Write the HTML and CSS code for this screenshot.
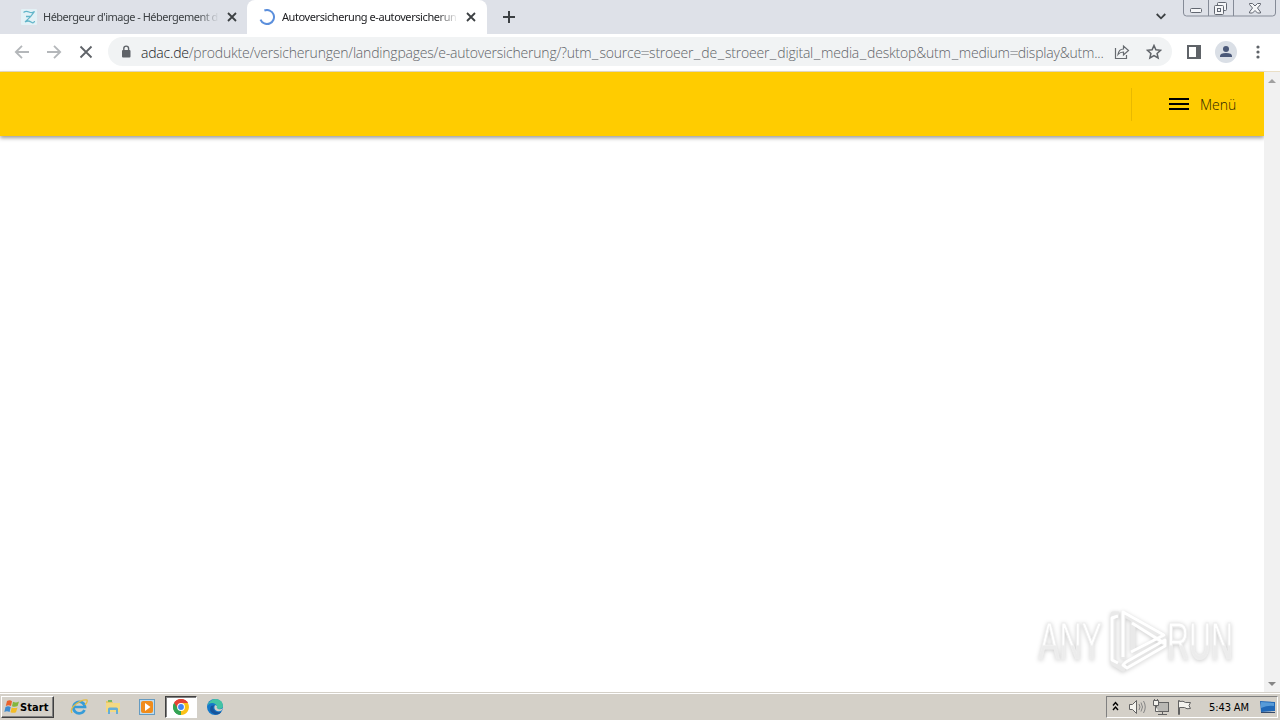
FILE: index.html
```html
<!DOCTYPE html>
<html lang="de">
<head>
<meta charset="utf-8">
<title>Autoversicherung e-autoversicherung</title>
<link rel="stylesheet" href="styles.css">
</head>
<body>
<div class="screen">
  <header class="tabstrip">
    <div class="tab">
      <svg class="fav" width="16" height="16" viewBox="0 0 16 16"><rect width="16" height="16" rx="1" fill="#e3f1f6"/><path d="M2.500 3.500Q5 1.500 8 3T13.500 2.500Q10 8 4 13Q7 11 10 13T13.500 12M5 7.500h5" fill="none" stroke="#62b5c9" stroke-width="1.300"/></svg>
      <span class="tab-title first">Hébergeur d'image - Hébergement d</span>
      <svg class="close" width="10" height="10" viewBox="0 0 10 10"><path d="M1 1l8 8M9 1l-8 8" stroke="#3c4043" stroke-width="1.8"/></svg>
    </div>
    <div class="tab active">
      <svg class="fav" width="16" height="16" viewBox="0 0 16 16"><path d="M8 1A7 7 0 1 1 1 8" transform="rotate(-22 8 8)" fill="none" stroke="#5b8fdc" stroke-width="2"/></svg>
      <span class="tab-title second">Autoversicherung e-autoversicherun</span>
      <svg class="close" width="10" height="10" viewBox="0 0 10 10"><path d="M1 1l8 8M9 1l-8 8" stroke="#3c4043" stroke-width="1.8"/></svg>
    </div>
    <svg class="plus" width="12" height="12" viewBox="0 0 12 12"><path d="M6 0v12M0 6h12" stroke="#3c4043" stroke-width="2"/></svg>
    <svg class="chev" width="10" height="7" viewBox="0 0 10 7"><path d="M.7 1L5 5.300 9.300 1" fill="none" stroke="#3c4043" stroke-width="1.800"/></svg>
    <svg class="winbtns" width="94" height="18" viewBox="0 0 94 18"><path d="M.5 0v13q0 3 3 3h86q3 0 3-3V0M25.500 0v16M50.500 0v16" fill="none" stroke="#858b97"/><g fill="#f5f6f8" stroke="#626771"><rect x="7.500" y="8.500" width="11" height="4" rx="1"/><rect x="34.500" y="2.500" width="9" height="8" rx="1"/><rect x="31.500" y="5.500" width="9" height="9" rx="1"/><rect x="34.500" y="8.500" width="3" height="3"/><path d="M66.500 3.500h3l2.500 2.500 2.500-2.500h3v1l-3 3.500 3 4v1h-3l-2.500-2.500-2.500 2.500h-3v-1l3-4-3-3.500z"/></g></svg>
  </header>
  <div class="toolbar">
    <svg class="navs" width="80" height="16" viewBox="0 0 80 16"><g fill="none" stroke="#b4b7ba" stroke-width="1.8"><path d="M15 8H2M8 1.800L1.800 8 8 14.200M33 8h13M40 1.800L46.200 8 40 14.200"/><path d="M66.500 2.500l11 11M77.500 2.500l-11 11" stroke="#5f6368"/></g></svg>
    <div class="omnibox">
      <svg width="10" height="14" viewBox="0 0 10 14"><rect x="1" y="5" width="8.500" height="7.500" rx="1" fill="#5f6368"/><path d="M2.800 5.500V3.500a2.400 2.400 0 0 1 4.800 0v2" fill="none" stroke="#5f6368" stroke-width="1.400"/></svg>
      <div class="url"><span class="host">adac.de</span>/produkte/versicherungen/landingpages/e-autoversicherung/?utm<span class="sep">_</span>source<span class="sep">=</span>stroeer<span class="sep">_</span>de<span class="sep">_</span>stroeer<span class="sep">_</span>digital<span class="sep">_</span>media<span class="sep">_</span>desktop&amp;utm<span class="sep">_</span>medium<span class="sep">=</span>display&amp;utm...</div>
      <svg class="share" width="16" height="16" viewBox="0 0 16 16"><g fill="none" stroke="#666a6f" stroke-width="1.200"><path d="M1.500 4v10.500h11V11"/><path d="M4 10.500Q4.800 5 9.500 5V2l5 4.500-5 4.500V8Q6 8 4 10.500z"/></g></svg>
      <svg class="star" width="16" height="16" viewBox="0 0 16 16"><path d="M8 1.500l1.900 4.300 4.700.5-3.500 3.100 1 4.600L8 11.600 3.900 14l1-4.600L1.400 6.300l4.700-.5z" fill="none" stroke="#5f6368" stroke-width="1.500"/></svg>
    </div>
    <svg class="panel" width="14" height="14" viewBox="0 0 14 14"><rect x="1" y="1" width="12" height="12" fill="none" stroke="#5f6368" stroke-width="2"/><path d="M9 0h5v14H9z" fill="#5f6368"/></svg>
    <svg class="avatar" width="22" height="22" viewBox="0 0 22 22"><circle cx="11" cy="11" r="11" fill="#dadfe6"/><circle cx="11" cy="8" r="3" fill="#4a5878"/><path d="M5 16v-1q0-3 6-3t6 3v1z" fill="#4a5878"/></svg>
    <svg class="dots" width="4" height="14" viewBox="0 0 4 14"><g fill="#5f6368"><circle cx="2" cy="2" r="1.600"/><circle cx="2" cy="7" r="1.600"/><circle cx="2" cy="12" r="1.600"/></g></svg>
  </div>
  <main class="viewport">
    <div class="page">
      <div class="site-header">
        <div class="menu"><span class="burger"><i></i><i></i><i></i></span><span class="menu-label">Menü</span></div>
      </div>
      <svg class="watermark" width="210" height="76" viewBox="0 0 210 76">
        <defs><linearGradient id="fade" x1="0" y1="0" x2="0" y2="1"><stop offset=".55" stop-color="#fff"/><stop offset=".58" stop-color="#ececec"/></linearGradient></defs>
        <g class="wm-letters"><text x="7" y="57" textLength="63" lengthAdjust="spacingAndGlyphs">ANY</text><text x="135" y="57" textLength="66" lengthAdjust="spacingAndGlyphs">RUN</text></g>
        <path class="wm-line" d="M87 12h-6v49l10 6v-4M91 57V12l41 22v7L101 20v29"/>
        <path class="wm-shape" d="M86 14l-6 2v42l6 3M91 55V10l41 23-33 17M100 21l32 20M91 63l4 3 38-22v-6L94 60z"/>
      </svg>
    </div>
    <aside class="scrollbar"><i class="up"></i><i class="down"></i></aside>
  </main>
  <footer class="taskbar">
    <div class="start"><svg width="16" height="16" viewBox="0 0 16 16"><path d="M3 2q3-1.500 5 .2L7 7Q4.500 5.500 1.800 7z" fill="#e9622b"/><path d="M9 2.700q3 1.500 6-.2L13.600 7Q11 8.500 8 7.300z" fill="#83b63c"/><path d="M1.500 8Q4 6.600 6.700 8L5.600 13Q3 11.500.3 13z" fill="#3d8bd0"/><path d="M7.700 8.400q3 1.400 5.800 0L12 13.200q-2.500 1.300-5.500 0z" fill="#f3bc26"/></svg>Start</div>
    <div class="launch">
      <svg width="18" height="18" viewBox="0 0 18 18"><path d="M14.500 12A5.800 5.800 0 1 1 15 9H4" fill="none" stroke="#379cd8" stroke-width="2.700"/><path d="M2 15Q-.5 11 6 6T17 2q1 2-2 5" fill="none" stroke="#e4bd43" stroke-width="1.300"/></svg>
      <svg width="18" height="18" viewBox="0 0 18 18"><path d="M2 3h6l1 2h7v9H2z" fill="#e8c866"/><path d="M4 2h4v2H4z" fill="#78b866"/><path d="M2 5h14v9H2z" fill="#f3d982"/><path d="M4 16v-5q0-1.500 1.500-1.500h7Q14 9.500 14 11v5h-2v-4H6v4z" fill="#65aed6"/></svg>
      <svg width="18" height="18" viewBox="0 0 18 18"><rect x="1.500" y="1.500" width="15" height="15" fill="#bedcf0" stroke="#659bc1"/><rect x="3" y="3" width="12" height="12" rx="2" fill="#f08c1c"/><path d="M7 5l5.500 4L7 13z" fill="#fff"/></svg>
      <div class="running"><svg width="16" height="16" viewBox="0 0 16 16"><path d="M8 8L1.100 4A8 8 0 0 1 14.900 4z" fill="#e54335"/><path d="M8 8l6.900-4A8 8 0 0 1 8 16z" fill="#fbc116"/><path d="M8 8v8A8 8 0 0 1 1.100 4z" fill="#34a353"/><path d="M8 4h7l-3.500 6L8 16l3-6z" fill="#fbc116"/><path d="M1.100 4L4.500 10 8 8V4h7A8 8 0 0 0 1.100 4z" fill="#e54335"/><path d="M1.100 4l4 6L8 12v4A8 8 0 0 1 1.100 4z" fill="#34a353"/><circle cx="8" cy="8" r="3.900" fill="#fff"/><circle cx="8" cy="8" r="2.900" fill="#4285f4"/></svg></div>
      <svg width="18" height="18" viewBox="0 0 18 18"><circle cx="9" cy="9" r="8" fill="#1478c9"/><path d="M2 6Q5 1 10 1q7 1 7 7 0 3-4 3-3 0-2-2.500Q10 5 6 5 3 5 2 7z" fill="#43c3a4"/><path d="M9 7Q6 9 8 12t7 2l1-1Q13 18 8 16 2 13 5 8z" fill="#17549b"/><path d="M9 7q-2 4 2 6 3 1 5-1l1-2q-2 2-5 1-2-1-1-3z" fill="#d4d0c8"/></svg>
    </div>
    <div class="tray">
      <svg width="80" height="18" viewBox="0 0 80 18"><path d="M1 7.500l2.500-3 2.500 3M1 12l2.500-3L6 12" fill="none" stroke="#000" stroke-width="1.400"/><g fill="#f4f3ee" stroke="#626262"><path d="M17.500 6.500h3l4-4v13l-4-4h-3z"/><path d="M27 6q2 3 0 6M29 4.500q3 4.500 0 9M31.500 3q3.500 6 0 12" fill="none" stroke="#858585"/><rect x="44.500" y="4.500" width="12" height="9" fill="#b9b8b4"/><path d="M46 16.500h9M50.500 14v2M41.500 2.500h5v5h-5zM43.500 8v5.500h3M42.500 1v2M45.500 1v2"/><path d="M66.500 16.500V2.500h1v1q4-1 6 1h5l-1.500 3 1.500 3q-4 1-6-1h-5v7z"/></g></svg>
      <span class="clock">5:43 AM</span>
      <svg class="desktop" width="16" height="14" viewBox="0 0 16 14"><path d="M0 1l15 1v9L1 12z" fill="#2068b7"/><path d="M1 2l13 1v3Q8 5 1 8z" fill="#579bd8"/><path d="M1 12h14v1H1z" fill="#344a6b"/></svg>
    </div>
  </footer>
</div>
</body>
</html>
```
FILE: styles.css
```css
* { box-sizing: border-box; }
body { margin: 0; }
svg { display: block; flex: none; }
.screen { width: 1280px; height: 720px; overflow: hidden; display: flex; flex-direction: column; background: #fff; }
.tabstrip { height: 34px; flex: none; display: flex; background: #dee1e8; }
.tab { width: 247px; height: 34px; display: flex; align-items: center; padding: 0 10px 0 21px; }
.tab.active { width: 240px; padding: 0 11px 0 12px; background: #fff; border-radius: 8px 8px 0 0; }
.tab-title { width: 176px; margin-left: 6px; white-space: nowrap; font: 11px/16px "Noto Sans", sans-serif; color: #3c4043; -webkit-mask-image: linear-gradient(90deg, #000 88%, transparent); mask-image: linear-gradient(90deg, #000 88%, transparent); }
.active .tab-title { margin-left: 7px; color: #202124; }
.first { letter-spacing: -.5px; }
.second { letter-spacing: -.42px; }
.close { margin-left: auto; }
.plus { margin: 11px 0 0 16px; }
.chev { margin: 13px 17px 0 auto; }
.winbtns { margin-right: 3px; }
.toolbar { height: 38px; flex: none; display: flex; align-items: center; padding: 0 20px 2px 14px; background: #fff; border-bottom: 1px solid #eadfc6; }
.omnibox { width: 1064px; height: 29px; margin-left: 14px; padding: 0 10px 0 13px; display: flex; align-items: center; border-radius: 15px; background: #f1f3f4; }
.url { width: 965px; margin-left: 10px; padding-top: 2px; white-space: nowrap; font: 300 14px/20px "Open Sans", sans-serif; color: #5f6368; letter-spacing: -.2px; }
.host { color: #202124; }
.sep { display: inline-block; width: 8px; text-align: center; transform: scaleX(1.15); }
.share { margin-left: 8px; }
.star { margin-left: auto; }
.panel { margin-left: 15px; }
.avatar { margin-left: 14px; }
.dots { margin-left: auto; }
.viewport { flex: 1; display: flex; min-height: 0; }
.page { flex: 1; display: flex; flex-direction: column; }
.site-header { height: 64px; display: flex; align-items: center; justify-content: flex-end; background: #ffcc00; box-shadow: 0 2px 4px rgba(0,0,0,.4); }
.menu { width: 133px; height: 33px; padding-left: 37px; border-left: 1px solid #e8b900; display: flex; align-items: center; }
.burger { width: 20px; height: 12px; display: flex; flex-direction: column; justify-content: space-between; }
.burger i { height: 2px; background: #000; }
.menu-label { margin-left: 11px; padding-top: 2px; font: 300 14px/20px "Open Sans", sans-serif; color: #2c2500; }
.watermark { overflow: visible; margin: auto 22px 14px auto; filter: drop-shadow(0 1px 2px rgba(0,0,0,.2)); }
.wm-letters { font: 51px "Liberation Sans", sans-serif; fill: url(#fade); stroke: #eee; stroke-width: 1.200px; }
.wm-line { fill: none; stroke: #e9e9e9; stroke-width: 5px; stroke-linejoin: round; }
.wm-shape { fill: none; stroke: #fff; stroke-width: 3px; stroke-linejoin: round; }
.scrollbar { width: 16px; padding: 7px 4px 6px; display: flex; flex-direction: column; justify-content: space-between; background: #f1f1f1; }
.up, .down { border: 4px solid transparent; border-top-width: 0; border-bottom: 4px solid #a0a0a0; }
.down { border-bottom-width: 0; border-top: 4px solid #858585; }
.taskbar { height: 28px; flex: none; display: flex; align-items: center; padding: 2px 2px 0 1px; background: #d4d0c8; box-shadow: inset 0 1px #d4d0c8, inset 0 2px #fff; }
.start { width: 53px; height: 22px; padding-left: 2px; display: flex; align-items: center; border: 1px solid; border-color: #fff #404040 #404040 #fff; box-shadow: inset -1px -1px #808080; font: bold 11px "DejaVu Sans Condensed", "DejaVu Sans", sans-serif; letter-spacing: .1px; color: #000; }
.launch { margin-left: 16px; display: flex; align-items: center; gap: 16px; }
.running { width: 32px; height: 22px; margin: 0 -7px; display: flex; align-items: center; justify-content: center; background: #fff; border: 1px solid; border-color: #404040 #fff #fff #404040; box-shadow: inset 1px 1px #808080; }
.tray { width: 172px; height: 22px; margin-left: auto; padding: 0 1px 0 5px; display: flex; align-items: center; border: 1px solid; border-color: #808080 #fff #fff #808080; }
.clock { margin-left: 17px; white-space: nowrap; font: 11px "DejaVu Sans Condensed", "DejaVu Sans", sans-serif; letter-spacing: -.1px; color: #000; }
.desktop { margin-left: auto; }
```
